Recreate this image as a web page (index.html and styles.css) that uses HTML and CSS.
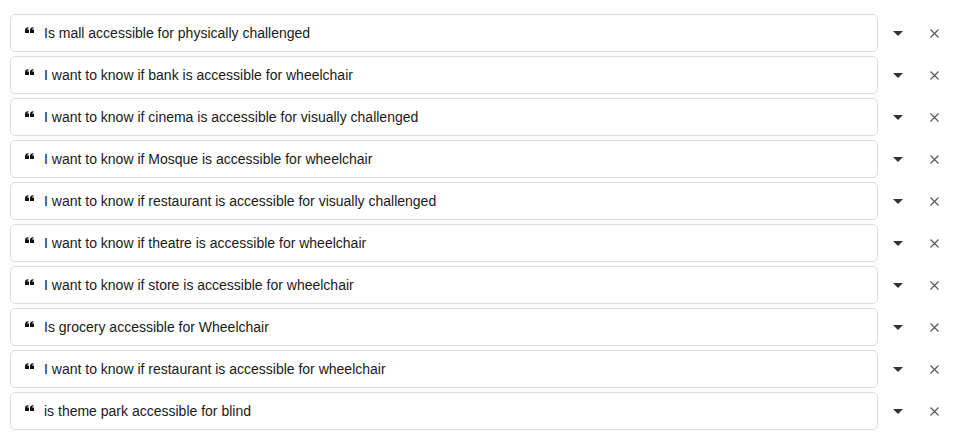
FILE: index.html
```html
<!DOCTYPE html>
<html>
<head>
<meta charset="utf-8">
<link rel="stylesheet" href="styles.css">
</head>
<body>
<div class="list">
  <div class="row"><div class="box"><svg class="quote" viewBox="0 0 9 6"><path d="M0 3.4C0 1.5 1.1 0.3 3.4 0v1.2C2.5 1.5 2.1 2 2 2.5h2V6H0z M5 3.4C5 1.5 6.1 0.3 8.4 0v1.2C7.5 1.5 7.1 2 7 2.5h2V6H5z"/></svg><span class="text">Is mall accessible for physically challenged</span></div><span class="caret"></span><svg class="close" viewBox="0 0 9 9"><path d="M0.5 0.5L8.5 8.5M8.5 0.5L0.5 8.5"/></svg></div>
  <div class="row"><div class="box"><svg class="quote" viewBox="0 0 9 6"><path d="M0 3.4C0 1.5 1.1 0.3 3.4 0v1.2C2.5 1.5 2.1 2 2 2.5h2V6H0z M5 3.4C5 1.5 6.1 0.3 8.4 0v1.2C7.5 1.5 7.1 2 7 2.5h2V6H5z"/></svg><span class="text">I want to know if bank is accessible for wheelchair</span></div><span class="caret"></span><svg class="close" viewBox="0 0 9 9"><path d="M0.5 0.5L8.5 8.5M8.5 0.5L0.5 8.5"/></svg></div>
  <div class="row"><div class="box"><svg class="quote" viewBox="0 0 9 6"><path d="M0 3.4C0 1.5 1.1 0.3 3.4 0v1.2C2.5 1.5 2.1 2 2 2.5h2V6H0z M5 3.4C5 1.5 6.1 0.3 8.4 0v1.2C7.5 1.5 7.1 2 7 2.5h2V6H5z"/></svg><span class="text">I want to know if cinema is accessible for visually challenged</span></div><span class="caret"></span><svg class="close" viewBox="0 0 9 9"><path d="M0.5 0.5L8.5 8.5M8.5 0.5L0.5 8.5"/></svg></div>
  <div class="row"><div class="box"><svg class="quote" viewBox="0 0 9 6"><path d="M0 3.4C0 1.5 1.1 0.3 3.4 0v1.2C2.5 1.5 2.1 2 2 2.5h2V6H0z M5 3.4C5 1.5 6.1 0.3 8.4 0v1.2C7.5 1.5 7.1 2 7 2.5h2V6H5z"/></svg><span class="text">I want to know if Mosque is accessible for wheelchair</span></div><span class="caret"></span><svg class="close" viewBox="0 0 9 9"><path d="M0.5 0.5L8.5 8.5M8.5 0.5L0.5 8.5"/></svg></div>
  <div class="row"><div class="box"><svg class="quote" viewBox="0 0 9 6"><path d="M0 3.4C0 1.5 1.1 0.3 3.4 0v1.2C2.5 1.5 2.1 2 2 2.5h2V6H0z M5 3.4C5 1.5 6.1 0.3 8.4 0v1.2C7.5 1.5 7.1 2 7 2.5h2V6H5z"/></svg><span class="text">I want to know if restaurant is accessible for visually challenged</span></div><span class="caret"></span><svg class="close" viewBox="0 0 9 9"><path d="M0.5 0.5L8.5 8.5M8.5 0.5L0.5 8.5"/></svg></div>
  <div class="row"><div class="box"><svg class="quote" viewBox="0 0 9 6"><path d="M0 3.4C0 1.5 1.1 0.3 3.4 0v1.2C2.5 1.5 2.1 2 2 2.5h2V6H0z M5 3.4C5 1.5 6.1 0.3 8.4 0v1.2C7.5 1.5 7.1 2 7 2.5h2V6H5z"/></svg><span class="text">I want to know if theatre is accessible for wheelchair</span></div><span class="caret"></span><svg class="close" viewBox="0 0 9 9"><path d="M0.5 0.5L8.5 8.5M8.5 0.5L0.5 8.5"/></svg></div>
  <div class="row"><div class="box"><svg class="quote" viewBox="0 0 9 6"><path d="M0 3.4C0 1.5 1.1 0.3 3.4 0v1.2C2.5 1.5 2.1 2 2 2.5h2V6H0z M5 3.4C5 1.5 6.1 0.3 8.4 0v1.2C7.5 1.5 7.1 2 7 2.5h2V6H5z"/></svg><span class="text">I want to know if store is accessible for wheelchair</span></div><span class="caret"></span><svg class="close" viewBox="0 0 9 9"><path d="M0.5 0.5L8.5 8.5M8.5 0.5L0.5 8.5"/></svg></div>
  <div class="row"><div class="box"><svg class="quote" viewBox="0 0 9 6"><path d="M0 3.4C0 1.5 1.1 0.3 3.4 0v1.2C2.5 1.5 2.1 2 2 2.5h2V6H0z M5 3.4C5 1.5 6.1 0.3 8.4 0v1.2C7.5 1.5 7.1 2 7 2.5h2V6H5z"/></svg><span class="text">Is grocery accessible for Wheelchair</span></div><span class="caret"></span><svg class="close" viewBox="0 0 9 9"><path d="M0.5 0.5L8.5 8.5M8.5 0.5L0.5 8.5"/></svg></div>
  <div class="row"><div class="box"><svg class="quote" viewBox="0 0 9 6"><path d="M0 3.4C0 1.5 1.1 0.3 3.4 0v1.2C2.5 1.5 2.1 2 2 2.5h2V6H0z M5 3.4C5 1.5 6.1 0.3 8.4 0v1.2C7.5 1.5 7.1 2 7 2.5h2V6H5z"/></svg><span class="text">I want to know if restaurant is accessible for wheelchair</span></div><span class="caret"></span><svg class="close" viewBox="0 0 9 9"><path d="M0.5 0.5L8.5 8.5M8.5 0.5L0.5 8.5"/></svg></div>
  <div class="row"><div class="box"><svg class="quote" viewBox="0 0 9 6"><path d="M0 3.4C0 1.5 1.1 0.3 3.4 0v1.2C2.5 1.5 2.1 2 2 2.5h2V6H0z M5 3.4C5 1.5 6.1 0.3 8.4 0v1.2C7.5 1.5 7.1 2 7 2.5h2V6H5z"/></svg><span class="text">is theme park accessible for blind</span></div><span class="caret"></span><svg class="close" viewBox="0 0 9 9"><path d="M0.5 0.5L8.5 8.5M8.5 0.5L0.5 8.5"/></svg></div>
</div>
</body>
</html>
```
FILE: styles.css
```css
html, body { margin: 0; padding: 0; background: #fff; }
body { font-family: "Liberation Sans", Arial, sans-serif; color: #1a1a1a; }
.list { display: flex; flex-direction: column; gap: 4px; padding: 14px 0 0 10px; }
.row { display: flex; align-items: center; height: 38px; }
.box {
  box-sizing: border-box; width: 868px; height: 38px;
  border: 1px solid #dcdcdc; border-radius: 5px;
  display: flex; align-items: center; padding-left: 14px;
}
.quote { width: 9px; height: 6px; fill: #111; margin-right: 10px; margin-top: -6px; flex: none; }
.text { font-size: 14px; line-height: 16px; margin-top: -1px; }
.caret {
  width: 0; height: 0; margin-left: 15px;
  border-left: 5px solid transparent; border-right: 5px solid transparent;
  border-top: 5px solid #333;
}
.close { width: 9px; height: 9px; margin-left: 27px; stroke: #555; stroke-width: 1.1; fill: none; flex: none; }
```
